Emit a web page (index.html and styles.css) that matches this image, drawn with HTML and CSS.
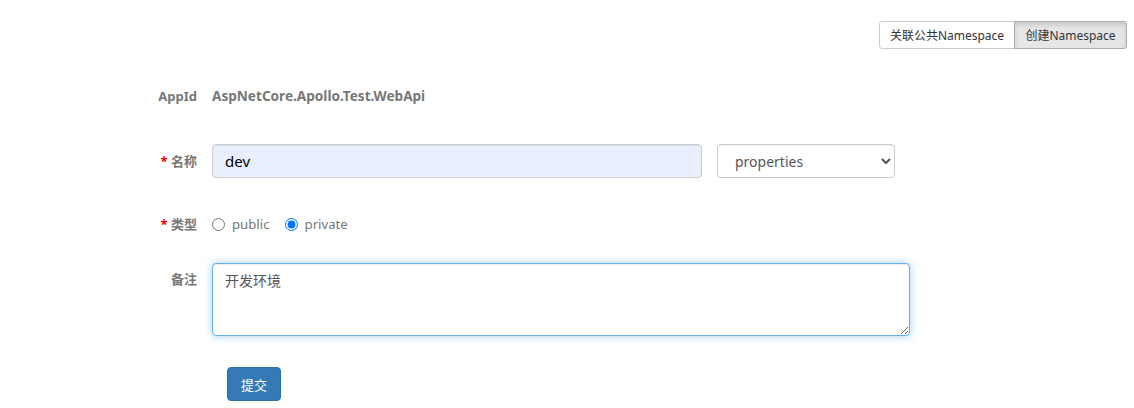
FILE: index.html
```html
<!DOCTYPE html>
<html lang="zh">
<head>
<meta charset="utf-8">
<title>创建Namespace</title>
<link rel="stylesheet" href="styles.css">
</head>
<body>
<div class="toolbar">
  <div class="btn-group">
    <button class="btn">关联公共Namespace</button>
    <button class="btn active">创建Namespace</button>
  </div>
</div>
<form class="form">
  <div class="row row-appid">
    <label class="label">AppId</label>
    <div class="static">AspNetCore.Apollo.Test.WebApi</div>
  </div>
  <div class="row row-name">
    <label class="label"><span class="req">*</span> 名称</label>
    <input class="input name-input" type="text" value="dev">
    <select class="input select">
      <option>properties</option>
      <option>xml</option>
      <option>json</option>
      <option>yml</option>
      <option>yaml</option>
    </select>
  </div>
  <div class="row row-type">
    <label class="label"><span class="req">*</span> 类型</label>
    <label class="radio"><input type="radio" name="type"> public</label>
    <label class="radio"><input type="radio" name="type" checked> private</label>
  </div>
  <div class="row row-comment">
    <label class="label label-top">备注</label>
    <textarea class="input textarea">开发环境</textarea>
  </div>
  <div class="row row-submit">
    <button type="button" class="btn-primary">提交</button>
  </div>
</form>
</body>
</html>
```

FILE: styles.css
```css
html, body {
  margin: 0;
  background: #fff;
}
body {
  padding: 21px 7px 0 0;
  font-family: "Noto Sans", "Noto Sans CJK SC", sans-serif;
  font-size: 13px;
  color: #333;
}
.toolbar {
  display: flex;
  justify-content: flex-end;
}
.btn-group {
  display: flex;
}
.btn {
  height: 28px;
  padding: 0;
  font-family: inherit;
  font-size: 12px;
  white-space: nowrap;
  color: #333;
  background: #fff;
  border: 1px solid #ccc;
  margin: 0;
  cursor: pointer;
}
.btn:first-child {
  border-radius: 3px 0 0 3px;
  width: 136px;
}
.btn:last-child {
  border-radius: 0 3px 3px 0;
  margin-left: -1px;
  width: 113px;
}
.btn.active {
  background: #e6e6e6;
  border-color: #adadad;
  box-shadow: inset 0 3px 5px rgba(0,0,0,.125);
}
.form {
  display: flex;
  flex-direction: column;
}
.row {
  display: flex;
  align-items: center;
  gap: 15px;
}
.label {
  width: 197px;
  text-align: right;
  font-weight: bold;
  color: #777;
  font-size: 13px;
  line-height: 20px;
  flex-shrink: 0;
}
.req {
  color: #e00;
  font-weight: bold;
}
.row-appid {
  margin-top: 37px;
  line-height: 20px;
}
.static {
  font-weight: bold;
  color: #777;
  font-size: 13.6px;
}
.row-name {
  margin-top: 38px;
}
.input {
  box-sizing: border-box;
  height: 34px;
  border: 1px solid #ccc;
  border-radius: 4px;
  font-family: inherit;
  font-size: 14px;
  color: #555;
  box-shadow: inset 0 1px 1px rgba(0,0,0,.075);
  padding: 6px 12px;
  margin: 0;
}
.name-input {
  width: 490px;
  background: #e8f0fe;
  color: #000;
  font-size: 15px;
}
.select {
  width: 178px;
  background: #fff;
  padding: 6px 12px 6px 13px;
}
.row-type {
  margin-top: 36px;
}
.radio {
  display: flex;
  align-items: center;
  gap: 7px;
  color: #777;
  font-size: 13.2px;
  line-height: 20px;
}
.radio input {
  margin: 0;
  width: 13px;
  height: 13px;
}
.row-comment {
  margin-top: 29px;
  align-items: flex-start;
}
.label-top {
  padding-top: 6px;
}
.textarea {
  width: 698px;
  height: 73px;
  resize: vertical;
  padding: 6px 12px;
  border-color: #66afe9;
  outline: 0;
  box-shadow: inset 0 1px 1px rgba(0,0,0,.075), 0 0 8px rgba(102,175,233,.6);
  color: #555;
}
.row-submit {
  margin-top: 31px;
  padding-left: 227px;
}
.btn-primary {
  height: 34px;
  width: 54px;
  padding: 0;
  background: #337ab7;
  border: 1px solid #2e6da4;
  border-radius: 4px;
  color: #fff;
  font-family: inherit;
  font-size: 13px;
}
```
